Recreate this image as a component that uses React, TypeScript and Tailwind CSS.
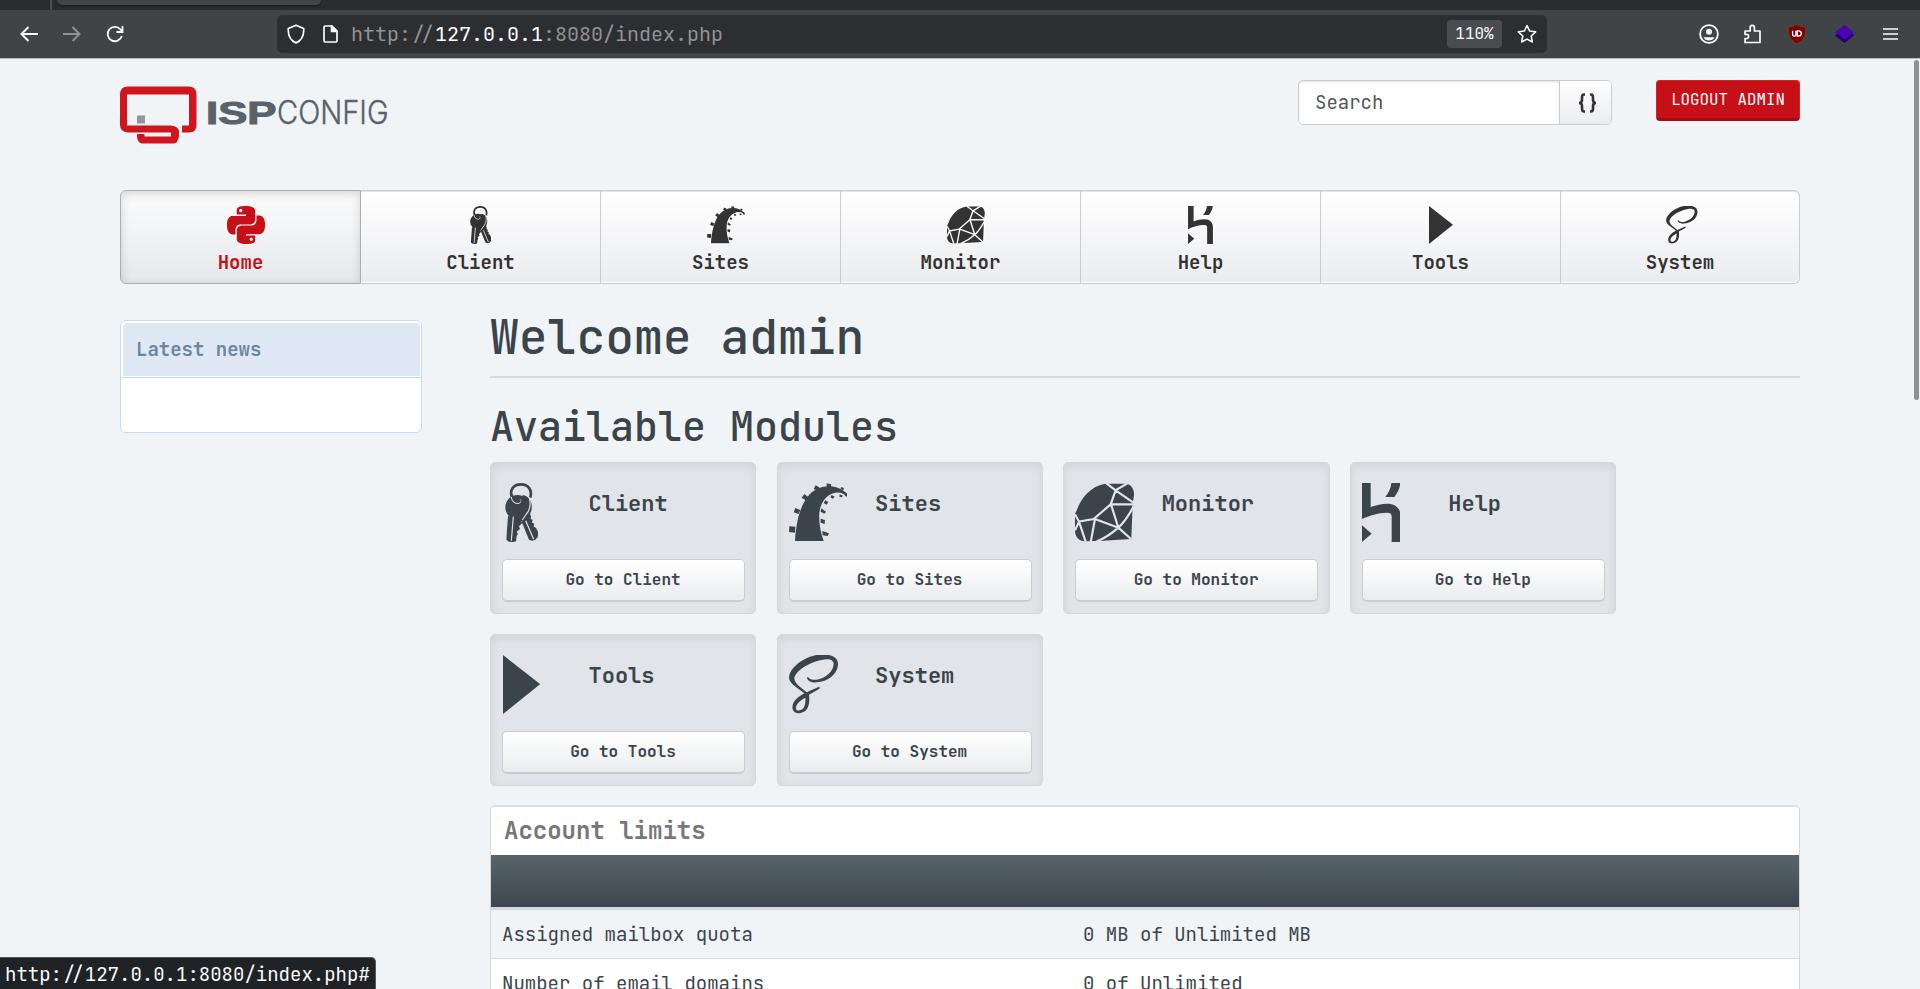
import { useId, type ReactNode } from "react";
import { SiPython } from "react-icons/si";

type IconProps = { className?: string };

function KeysIcon({ className }: IconProps) {
  const id = useId();
  return (
    <svg viewBox="45 69 100 177" className={className} fill="currentColor">
      <mask id={id} maskUnits="userSpaceOnUse" x="40" y="60" width="120" height="200">
        <rect x="40" y="60" width="120" height="200" fill="#fff" />
        <path d="M64 111c1 12 10 21 21 19 8-2 9-10 4-13M117 112c6 14 4 38-8 50l-12 18M70 170l-6 72M107 182l24 56" fill="none" stroke="#000" strokeWidth="3.5" />
      </mask>
      <g mask={`url(#${id})`}>
        <path d="M66 112c-8-22 4-39 27-39 22 0 34 17 28 40" fill="none" stroke="currentColor" strokeWidth="8" />
        <circle cx="83" cy="142" r="37" />
        <path d="M98 105c26 4 34 32 22 58l3 6-1 8 6 2-2 9 7 3-2 9 7 3 7 15-2 14-8 8-9 2-9-3-25-61z" />
        <path d="M54 168l44 4-5 12 4 5-10 10 3 8-10 8 4 7-4 5-1 9-1 8-8 2-13-1-8-6z" />
      </g>
      <path d="M68 104c0 14 5 22 16 22 8-1 8-6 4-9" fill="none" stroke="currentColor" strokeWidth="4" />
    </svg>
  );
}

function TentacleIcon({ className }: IconProps) {
  return (
    <svg viewBox="894 70 176 177" className={className} fill="currentColor">
      <path d="M912 244c3-50 13-105 42-138 30-34 86-36 115-2l-2 6c-10-11-24-14-38-10-24 7-41 29-44 61-2 31 4 57 13 83z" />
      <path d="M895 200l18 1-1 18-18-2zM913 145l15 6-5 12-15-5zM940 103l12 9-8 10-12-8zM974 77l11 6-4 10-13-5zM1007 71l14 3-2 11-12-3zM1050 82l9 3-2 7-8-3zM1063 97l6 6-2 9-6-5zM1046 104l10 4-4 5-7-2zM1022 106l9 5-5 6-8-4zM1003 122l9 5-5 8-9-5zM991 146l14 10-5 6-11-6zM989 177l13 4-1 12-12-4zM994 214l20 7-4 8-15-2z" />
    </svg>
  );
}

function RubyIcon({ className }: IconProps) {
  const id = useId();
  return (
    <svg viewBox="42 40 178 177" className={className} fill="currentColor">
      <mask id={id} maskUnits="userSpaceOnUse" x="40" y="36" width="190" height="190">
        <rect x="40" y="36" width="190" height="190" fill="#fff" />
        <path
          d="M132 38l32 24 52 36M204 38l-40 24-15 42h70M149 104L98 148l-44 8-12-22M54 156l-12 26M54 156l20 60M102 148l-13 70M102 148l70 26-22-70M218 110c-14 26-28 48-46 64s-36 30-66 42M172 174l38 34"
          fill="none"
          stroke="#000"
          strokeWidth="6.5"
        />
      </mask>
      <path mask={`url(#${id})`} d="M132 42h62c16 0 26 16 25 34l-4 28-4 104-86 5-52 2c-20 0-31-14-31-34v-49l6-12C60 86 88 50 132 42z" />
    </svg>
  );
}

function HerokuIcon({ className }: IconProps) {
  return (
    <svg viewBox="907 39 116 177" className={className} fill="currentColor">
      <path d="M907 39h26v72c16-6 34-10 50-10 26 0 40 16 40 37v78h-27v-77c0-8-5-11-14-11-24 0-54 9-75 19zM995 39h27c-1 16-8 30-18 42h-27c10-13 17-27 18-42zM907 166l29 25-29 25z" />
    </svg>
  );
}

function PlayIcon({ className }: IconProps) {
  return (
    <svg viewBox="39 44 111 176" className={className} fill="currentColor">
      <path d="M39 44l111 87-111 89z" />
    </svg>
  );
}

function ScriptIcon({ className }: IconProps) {
  return (
    <svg viewBox="894 44 147 177" className={className} fill="currentColor">
      <path
        fillRule="evenodd"
        d="M950 109c6 8 17 11 28 9 28-5 50-27 50-48-1-13-17-16-36-11-41 8-79 34-82 55 1 18 21 28 37 42l37-17c3 1 3 5 0 7l-30 17c2 18 1 36-9 47-11 11-36 13-40-3-4-20 12-36 35-48-14-14-45-27-46-47 2-33 50-65 90-69 35-3 59 7 57 31-3 29-30 50-64 52-15 1-28-4-29-14zM943 172c-17 9-30 21-28 33 2 9 17 6 23-3 5-8 6-19 5-30z"
      />
    </svg>
  );
}

function HomeIcon({ className }: IconProps) {
  return <SiPython className={className} />;
}

const NAV: { label: string; Icon: (p: IconProps) => ReactNode; icon: string; card: string; active?: boolean }[] = [
  { label: "Home", Icon: HomeIcon, icon: "w-[38px] ml-[11px]", card: "", active: true },
  { label: "Client", Icon: KeysIcon, icon: "w-[21.5px]", card: "ml-[3px]" },
  { label: "Sites", Icon: TentacleIcon, icon: "w-[38px] ml-[11px]", card: "" },
  { label: "Monitor", Icon: RubyIcon, icon: "w-[38px] ml-[11px]", card: "" },
  { label: "Help", Icon: HerokuIcon, icon: "w-[25px]", card: "" },
  { label: "Tools", Icon: PlayIcon, icon: "w-[24px]", card: "ml-[1px]" },
  { label: "System", Icon: ScriptIcon, icon: "w-[31.5px] ml-[4px]", card: "" },
];

const LIMITS = [
  ["Assigned mailbox quota", "0 MB of Unlimited MB"],
  ["Number of email domains", "0 of Unlimited"],
];

function BrowserBar() {
  return (
    <div className="shrink-0">
      <div className="flex h-[10px] bg-[#292c30]">
        <div className="ml-[50px] h-full w-[2px] bg-[#4b4f52]" />
        <div className="ml-[5px] h-[5px] w-[264px] rounded-b-[5px] bg-[#404547] shadow-[0_1px_2px_#15181a]" />
      </div>
      <div className="flex h-[49px] items-center border-b border-[#b9bcbe] bg-[#404446] pb-[1px] text-[#fbfbfe]">
        <svg className="ml-[20px] h-[18px] w-[18px]" viewBox="0 0 18 18" fill="none" stroke="currentColor" strokeWidth="2">
          <path d="M18 9H2M8.500 2L1.500 9l7 7" />
        </svg>
        <svg className="ml-[25px] h-[18px] w-[18px] text-[#8f9193]" viewBox="0 0 18 18" fill="none" stroke="currentColor" strokeWidth="2">
          <path d="M0 9h16M9.500 2l7 7-7 7" />
        </svg>
        <svg className="ml-[25px] h-[18px] w-[18px]" viewBox="0 0 18 18" fill="none" stroke="currentColor" strokeWidth="1.800">
          <path d="M15.800 11A7.200 7.200 0 1 1 14.500 4.500L16 6M16.500 1v6h-6" />
        </svg>
        <div className="ml-[153px] flex h-[38px] w-[1270px] items-center rounded-[5px] bg-[#2d2e32]">
          <svg className="ml-[10px] h-[20px] w-[18px]" viewBox="0 0 18 20" fill="none" stroke="currentColor" strokeWidth="1.700">
            <path d="M9 1.200l7.700 3.300c.4 7-1.700 11.800-7.700 14.400C3 16.300.9 11.500 1.300 4.500z" strokeLinejoin="round" />
          </svg>
          <svg className="ml-[18px] h-[18px] w-[15px]" viewBox="0 0 15 18" fill="none" stroke="currentColor" strokeWidth="1.700">
            <path d="M2.500 1H9l5 5v9.500a1.500 1.500 0 0 1-1.500 1.500h-10A1.500 1.500 0 0 1 1 15.500v-13A1.500 1.500 0 0 1 2.500 1z" />
            <path d="M8.500 1v5.500H14z" fill="currentColor" />
          </svg>
          <div className="ml-[13px] text-[20px] leading-[26px] text-[#929395]">
            http://<span className="text-white">127.0.0.1</span>:8080/index.php
          </div>
          <div className="mr-[15px] ml-auto flex h-[28px] w-[55px] items-center justify-center rounded-[4px] bg-[#4b4c4f] pt-[1px] text-[16px]">110%</div>
          <svg className="mr-[10px] h-[20px] w-[20px]" viewBox="0 0 20 20" fill="none" stroke="currentColor" strokeWidth="1.600" strokeLinejoin="round">
            <path d="M10 1.500l2.600 5.500 6 .8-4.400 4.200 1.100 6L10 15.100 4.700 18l1.100-6L1.400 7.800l6-.8z" />
          </svg>
        </div>
        <svg className="ml-[152px] h-[20px] w-[20px]" viewBox="0 0 20 20">
          <circle cx="10" cy="10" r="8.900" fill="none" stroke="currentColor" strokeWidth="1.800" />
          <circle cx="10" cy="7.800" r="3" fill="currentColor" />
          <path d="M4.500 13.300h11c-1 2.300-3 3.200-5.500 3.200s-4.500-.9-5.500-3.200z" fill="currentColor" />
        </svg>
        <svg className="ml-[25px] h-[20px] w-[17px]" viewBox="0 0 17 20" fill="none" stroke="currentColor" strokeWidth="1.700">
          <path d="M1 7h5.200V3.500a2 2 0 0 1 4.200 0V7H16v11.500H1v-4h1.500a2.100 2.100 0 0 0 0-4.200H1z" strokeLinejoin="round" />
        </svg>
        <svg className="ml-[27px] h-[20px] w-[18px]" viewBox="0 0 18 20">
          <path d="M9 .5c2.500 1.700 5 2.200 8.500 2.200C18 11 16 16.500 9 19.700 2 16.500 0 11 .5 2.700 4 2.700 6.500 2.200 9 .5z" fill="#800000" stroke="#6b4a4a" strokeWidth=".6" />
          <path d="M4.600 6.800v3.700c0 2.100 3.300 2.100 3.300 0V6.800M9.300 6.800v5.200h1.300c3.600 0 3.600-5.200 0-5.200z" fill="none" stroke="#fff" strokeWidth="1.300" />
        </svg>
        <svg className="ml-[28px] h-[20px] w-[21px]" viewBox="0 0 21 20">
          <path d="M4 8h13l3 3.500-9.500 7.500L1 11.500z" fill="#1c0070" />
          <path d="M10.500 1L20 8.200 10.500 15.500 1 8.200z" fill="#4a04b0" />
        </svg>
        <svg className="ml-[28px] h-[14px] w-[15px]" viewBox="0 0 15 14" stroke="currentColor" strokeWidth="1.600">
          <path d="M0 2h15M0 7h15M0 12h15" />
        </svg>
      </div>
    </div>
  );
}

function Logo() {
  return (
    <svg className="mt-[16px] -ml-[10px] h-[80px] w-[290px]" viewBox="0 0 290 80">
      <path
        d="M18 11.500H78.500q8 0 8 8V50q0 7.500-7.500 7.500H72V50.500H79V19.500H17V50.500H61q8 .5 8 7V61q-1 7.500-5.500 7.500H32q-5-1-5-7.500V59h7.500v2.500H61V57.500H18q-8-.5-8-8V19.500q0-8 8-8z"
        fill="#cf151d"
      />
      <rect x="27" y="40.500" width="8" height="8" fill="#8d979c" />
      <text x="96" y="49" textLength="70.500" lengthAdjust="spacingAndGlyphs" className="font-['Liberation_Sans'] text-[31px] font-bold" fill="#596268" stroke="#596268" strokeWidth="1">
        ISP
      </text>
      <text x="167" y="49" textLength="111.500" lengthAdjust="spacingAndGlyphs" className="font-['Inter'] text-[32px] font-light" fill="#596268" stroke="#596268" strokeWidth=".4">
        CONFIG
      </text>
    </svg>
  );
}

export default function App() {
  return (
    <div className="relative flex h-[989px] w-[1920px] flex-col overflow-hidden bg-[#f0f4f7] font-['JetBrains_Mono','DejaVu_Sans_Mono',monospace] text-[19px] text-[#3b444b]">
      <BrowserBar />
      <div className="mx-auto flex w-[1680px] flex-col">
        <header className="flex h-[131px] items-start">
          <Logo />
          <div className="mt-[21px] ml-auto flex h-[45px] w-[314px] overflow-hidden rounded-[5px] border border-[#ccc] bg-white">
            <div className="flex flex-1 items-center pt-[2px] pl-[16px] text-[#555] shadow-[inset_0_2px_2px_rgba(0,0,0,0.08)]">Search</div>
            <div className="flex w-[52px] items-center justify-center border-l border-[#ccc] bg-linear-to-b from-white to-[#ebecef] text-[#333]">
              <svg className="ml-[4px] h-[20px] w-[19px]" viewBox="0 0 19 20" fill="none" stroke="currentColor" strokeWidth="2.600">
                <path d="M7 1.500H6C4 1.500 4 3 4 4.500V7C4 9 3 10 1 10c2 0 3 1 3 3v2.500c0 1.500 0 3 2 3h1M12 1.500h1c2 0 2 1.500 2 3V7c0 2 1 3 3 3-2 0-3 1-3 3v2.500c0 1.500 0 3-2 3h-1" />
              </svg>
            </div>
          </div>
          <div className="mt-[21px] ml-[44px] flex h-[41px] w-[144px] items-center justify-center rounded-[4px] border border-b-[3px] border-[#d2232a] border-b-[#a00d13] bg-[#c60f17] text-[15.800px] text-white">
            LOGOUT ADMIN
          </div>
        </header>

        <nav className="flex h-[94px]">
          {NAV.map(({ label, Icon, icon, active }) => (
            <div
              key={label}
              className={
                "flex w-[240px] flex-col items-center border-y border-r bg-linear-to-b pt-[15px] first:w-[241px] first:rounded-l-[6px] first:border-l last:w-[239px] last:rounded-r-[6px] " +
                (active
                  ? "border-[#adadad] from-[#fcfcfc] to-[#e5e8eb] text-[#c60f17] shadow-[inset_0_3px_10px_rgba(0,0,0,0.15)]"
                  : "border-[#ccc] from-white to-[#ebecef] text-[#333] shadow-[inset_0_-1px_0_#fff,inset_0_1px_0_#e4e4e4]")
              }
            >
              <Icon className={"h-[38px] shrink-0 drop-shadow-[1px_1px_0_#fff] " + icon} />
              <div className="mt-[7px] leading-[24px] font-bold">{label}</div>
            </div>
          ))}
        </nav>

        <div className="flex items-start">
          <aside className="mt-[36px] h-[113px] w-[302px] rounded-[6px] border border-[#cbdcee] bg-white">
            <div className="h-[57px] border-b border-[#c5d6e6] p-[2px] pr-[1px] pb-[1px]">
              <div className="flex h-full items-center rounded-t-[4px] bg-[#dfe9f6] pt-[2px] pl-[13px] font-bold text-[#6c879c]">Latest news</div>
            </div>
          </aside>

          <main className="ml-[68px] w-[1310px]">
            <h1 className="mt-[25px] h-[69px] border-b-2 border-[#d8dbdb] text-[48px] leading-[56px] font-medium">Welcome admin</h1>
            <h2 className="mt-[27px] text-[40px] leading-[44px] font-medium">Available Modules</h2>
            <div className="mt-[13px] grid grid-cols-[repeat(4,266.400px)] gap-x-[20.200px] gap-y-[20px]">
              {NAV.filter((m) => !m.active).map(({ label, Icon, card }) => (
                <section
                  key={label}
                  className="flex h-[152px] flex-col rounded-[5px] border border-[#d5d8db] bg-[#e1e4e9] px-[11px] pt-[20px] shadow-[inset_0_3px_10px_rgba(0,0,0,0.08)]"
                >
                  <div className="flex h-[59px]">
                    <div className="flex w-[85px] shrink-0">
                      <Icon className={"h-[59px] " + card} />
                    </div>
                    <h3 className="mt-[7px] ml-[1.500px] text-[22px] leading-[28px] font-semibold">{label}</h3>
                  </div>
                  <div className="mt-[17px] flex h-[43px] w-[243px] items-center justify-center rounded-[5px] border border-b-2 border-[#ccc] bg-linear-to-b from-white to-[#ebecef] pr-[1px] text-[16px] font-semibold">
                    Go to {label}
                  </div>
                </section>
              ))}
            </div>

            <div className="mt-[19px] rounded-t-[5px] border border-t-2 border-[#d5d8db] border-t-[#dedfe0] bg-white">
              <div className="flex h-[48px] items-center pl-[13px] text-[24px] font-bold text-[#777]">Account limits</div>
              <div className="h-[55px] border-b-[3px] border-[#d6d7d9] bg-linear-to-b from-[#58646c] to-[#3d464e]" />
              {LIMITS.map(([name, value]) => (
                <div key={name} className="flex h-[49px] items-center border-b border-[#d9dbdd] pt-[2px] pl-[11px] odd:bg-[#f0f4f7] even:bg-white">
                  <div className="w-[581px]">{name}</div>
                  <div>{value}</div>
                </div>
              ))}
            </div>
          </main>
        </div>
      </div>

      <div className="absolute top-[60px] right-[1px] h-[340px] w-[5px] rounded-full bg-[#8f9092]" />
      <div className="absolute bottom-0 left-0 flex h-[32px] w-[376px] items-center rounded-tr-[5px] border-t border-r border-[#55595c] bg-[#202326] pt-[3px] pl-[5px] text-[19px] text-[#fbfbfe]">
        http://127.0.0.1:8080/index.php#
      </div>
    </div>
  );
}
